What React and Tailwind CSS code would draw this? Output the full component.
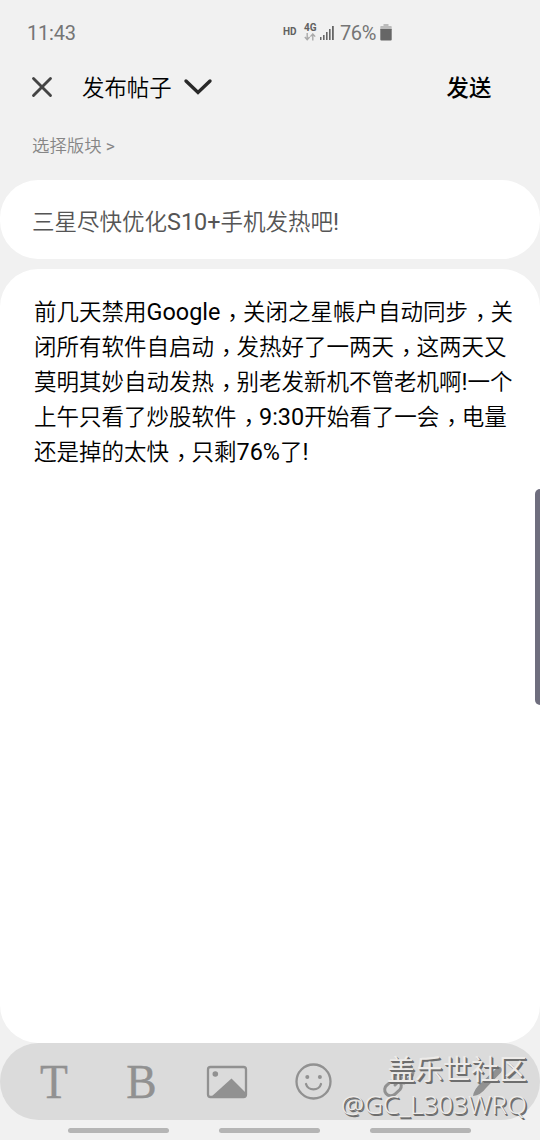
import { X } from 'lucide-react';

const lines = [
  '前几天禁用Google，关闭之星帳户自动同步，关',
  '闭所有软件自启动，发热好了一两天，这两天又',
  '莫明其妙自动发热，别老发新机不管老机啊!一个',
  '上午只看了炒股软件，9:30开始看了一会，电量',
  '还是掉的太快，只剩76%了!',
];

// Latin runs are a little larger than the hanzi, commas sit mid-cell
function Mixed({ text }) {
  return text.split(/([\x21-\x7e]+|，)/).map((part, i) => {
    if (part === '，') {
      return (
        <span key={i} lang="zh-Hant" className="inline-block translate-x-[1px] translate-y-[6px] font-['Noto_Sans_CJK_TC',sans-serif] leading-none">，</span>
      );
    }
    if (/^[\x21-\x7e]/.test(part)) {
      return <span key={i} className="text-[23.4px] font-normal">{part}</span>;
    }
    return <span key={i}>{part}</span>;
  });
}

function StatusBar() {
  return (
    <div className="flex h-[57px] items-start pt-[20px] text-[#606060]">
      <span className="ml-[27px] w-[256px] text-[20px] leading-[27px] tracking-[-0.2px] text-[#757575]">11:43</span>
      <span className="mt-[6px] w-[21px] text-[10px] font-bold leading-[11px]">HD</span>
      <div className="w-[15px] pt-[3px]">
        <div className="text-[10px] font-bold leading-[10px]">4G</div>
        <svg width="12" height="8" viewBox="0 0 12 8" fill="none" stroke="#aaa" strokeWidth="1.4">
          <path d="M3.2 0v6M.8 4l2.4 2.6L5.6 4M8.8 7.5V1.2M6.4 3.6L8.8 1l2.4 2.6" />
        </svg>
      </div>
      <svg className="mt-[5px]" width="16" height="16" viewBox="0 0 16 16" fill="#666">
        <path d="M1 12h1.5v3H1zM4 10h1.6v5H4zM7 7h1.6v8H7zM10 4h1.6v11H10zM13 1h1.8v14H13z" />
      </svg>
      <span className="ml-[5px] w-[40px] text-[20px] leading-[27px] tracking-[-0.4px] text-[#757575]">76%</span>
      <svg className="mt-[4px]" width="12" height="17" viewBox="0 0 12 17">
        <path d="M3.5 0h5v2H11q.7 0 .7.7V6H.3V2.7q0-.7.7-.7h2.5z" fill="#bbb" />
        <path d="M.3 5h11.4v10.5q0 1-1 1H1.3q-1 0-1-1z" fill="#666" />
      </svg>
    </div>
  );
}

function Toolbar() {
  return (
    <div className="relative flex h-[77px] items-center rounded-[38.5px] bg-[#dbdbdb] text-[#919191]">
      <span className="ml-[39px] w-[30px] scale-x-[0.93] text-center font-['Liberation_Serif',serif] text-[49px] leading-[77px] [-webkit-text-stroke:0.4px_#919191]">T</span>
      <span className="ml-[56px] mr-[48px] w-[33px] scale-x-[0.93] text-center font-['Liberation_Serif',serif] text-[49px] leading-[77px] [-webkit-text-stroke:0.4px_#919191]">B</span>
      <svg className="mr-[47px]" width="42" height="34" viewBox="0 0 42 34">
        <rect x="2" y="2" width="38" height="30" rx="2.5" fill="none" stroke="#919191" strokeWidth="2.3" />
        <circle cx="9.3" cy="9" r="2.8" fill="#919191" />
        <path d="M5 32L25.5 13.5 40 28v4z" fill="#919191" />
      </svg>
      <svg className="mr-[47px]" width="38" height="38" viewBox="0 0 38 38" fill="none" stroke="#919191" strokeWidth="2.3">
        <circle cx="18.5" cy="18.5" r="17" />
        <circle cx="12.3" cy="14" r="2" fill="#919191" stroke="none" />
        <circle cx="24.9" cy="14" r="2" fill="#919191" stroke="none" />
        <path d="M11 21a7.7 7 0 0 0 15 0" strokeLinecap="round" />
      </svg>
      <svg className="mr-[55px]" width="38" height="38" viewBox="0 0 38 38" fill="none" stroke="#919191" strokeWidth="3" strokeLinecap="round">
        <path d="M12 17.5l-5 4.5a6 6 0 0 0 7.5 9.5l5.5-5a6 6 0 0 0-1-8.5l-4 4" />
        <path d="M24 20l7-6a6 6 0 0 0-8-9l-6 5a6 6 0 0 0 1 8.5l4-4" />
      </svg>
      <svg width="34" height="38" viewBox="0 0 34 38" fill="#919191">
        <path d="M0 33Q1 26 8 20L24 5q3-2 4.5 0 1.5 2-.5 4.5L13 25q-5 7-13 8z" />
      </svg>
      <div className="absolute right-[13px] top-[6px] text-right text-[#edebe9]">
        <div className="font-['Noto_Sans_CJK_SC',sans-serif] text-[28px] leading-[38px] [text-shadow:1px_1px_0_#6e6e6e,2px_2px_0_#6e6e6e]">盖乐世社区</div>
        <div className="font-['Noto_Sans',sans-serif] text-[26px] font-light leading-[35px] [text-shadow:1px_1px_0_#6e6e6e,1.6px_1.6px_0_#6e6e6e]">@GC_L303WRQ</div>
      </div>
    </div>
  );
}

export default function App() {
  return (
    <div className="relative flex h-[1140px] w-[540px] flex-col overflow-hidden bg-[#f1f1f1] font-[Roboto,'Noto_Sans_CJK_SC',sans-serif]" lang="zh-CN">
      <StatusBar />
      <header className="flex h-[60px] items-center">
        <X className="mb-px ml-[25px] text-[#444]" size={34} strokeWidth={2} />
        <h1 className="ml-[23px] pt-[2px] text-[22.4px] font-[350] leading-[33px]">发布帖子</h1>
        <svg className="ml-[11px]" width="30" height="18" viewBox="0 0 30 18" fill="none" stroke="#292929" strokeWidth="3.4">
          <path d="M3 3l12 11.5L27 3" strokeLinecap="round" />
        </svg>
        <button className="ml-[234px] pt-[2px] text-[22.4px] font-medium leading-[33px]">发送</button>
      </header>
      <div className="h-[63px] pl-[32px] pt-[16px] text-[17.4px] font-[350] leading-[26px] text-[#868686]">
        选择版块 <span className="font-normal">&gt;</span>
      </div>
      <div className="mb-[10px] flex h-[79px] items-center rounded-[38px] bg-white pl-[32px] pt-[6px] text-[22.5px] font-[350] text-[#555]">
        <p className="whitespace-nowrap"><Mixed text="三星尽快优化S10+手机发热吧!" /></p>
      </div>
      <main className="h-[774px] rounded-[38px] bg-white pl-[34px] pt-[26px] text-[22.5px] font-[350] text-black">
        {lines.map((line) => (
          <p key={line} className="h-[35px] whitespace-nowrap leading-[35px]"><Mixed text={line} /></p>
        ))}
      </main>
      <Toolbar />
      <nav className="ml-[68px] mt-[8px] flex gap-[50px]">
        <span className="h-[5px] w-[101px] rounded-full bg-[#b5b5b5]" />
        <span className="h-[5px] w-[101px] rounded-full bg-[#b5b5b5]" />
        <span className="h-[5px] w-[101px] rounded-full bg-[#b5b5b5]" />
      </nav>
      {/* Edge panel handle */}
      <div className="absolute right-0 top-[489px] h-[216px] w-[5px] rounded-l-[5px] bg-[#6f6e7e]" />
    </div>
  );
}
